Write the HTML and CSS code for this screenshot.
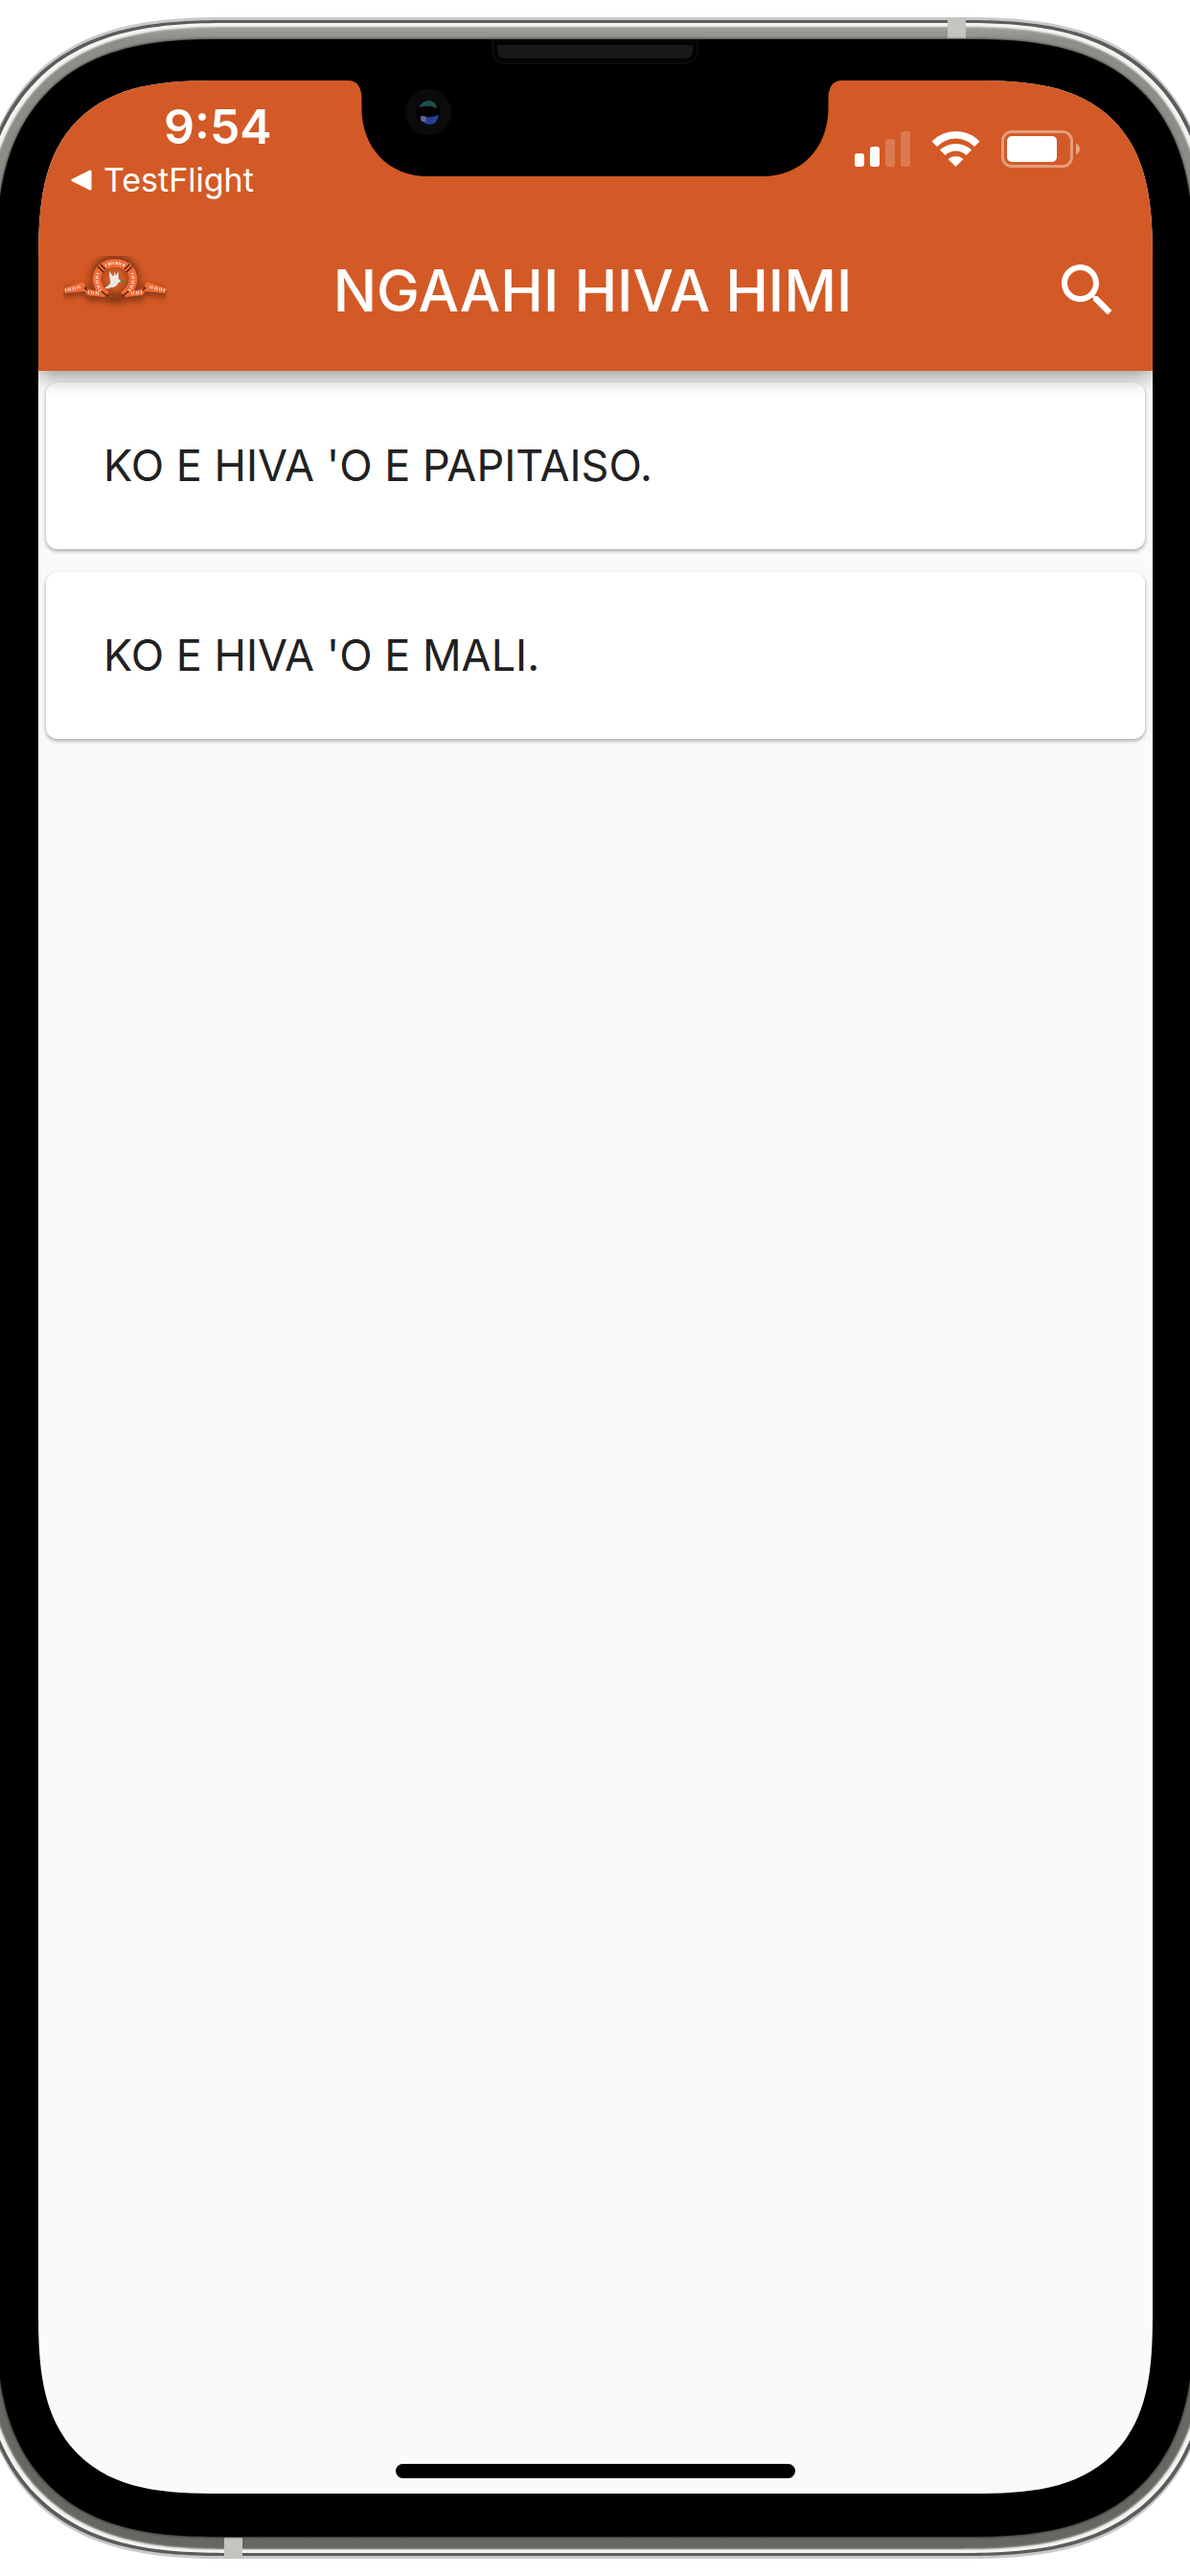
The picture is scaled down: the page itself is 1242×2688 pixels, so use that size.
FILE: index.html
```html
<!DOCTYPE html>
<html lang="to">
<head>
  <meta charset="utf-8">
  <meta name="viewport" content="width=device-width, initial-scale=1">
  <title>NGAAHI HIVA HIMI</title>
  <link rel="stylesheet" href="styles.css">
</head>
<body>
  <div class="stage">
    <div class="phone">
      <span class="antenna antenna-top"></span>
      <span class="antenna antenna-bottom"></span>
      <div class="bezel">
        <span class="speaker"></span>
        <svg class="notch" viewBox="0 0 516 101" aria-hidden="true">
          <path d="M0 0C11 0 14 8 14.500 18V30C15 70 42 100 84 100H432C474 100 501 70 501.500 30V18C502 8 505 0 516 0Z" fill="#000"/>
          <circle cx="84" cy="33" r="24" fill="#0b0b0b"/>
          <circle cx="84" cy="33" r="13" fill="#020204"/>
          <path d="M74 28Q78 20 86 21Q92 22 93 29Q86 25 74 28Z" fill="#1c4f4c"/>
          <path d="M75 37Q84 40 95 36Q94 46 84 46Q77 45 75 37Z" fill="#233f94"/>
          <circle cx="79" cy="40" r="3" fill="#6d6090"/>
        </svg>
        <div class="screen">
          <header class="header">
            <div class="status">
              <div class="status-left">
                <time class="clock">9:54</time>
                <a class="back" href="#testflight">
                  <svg class="back-arrow" viewBox="0 0 22 22" aria-hidden="true"><path d="M2 11L20 2V20Z" fill="#fff" stroke="#fff" stroke-width="3" stroke-linejoin="round"/></svg>
                  TestFlight
                </a>
              </div>
              <div class="status-right">
                <svg class="signal" viewBox="0 0 58 37" aria-hidden="true" fill="#fff">
                  <rect y="23" width="10" height="14" rx="3"/>
                  <rect x="16" y="16" width="10" height="21" rx="3"/>
                  <rect x="32" y="8" width="10" height="29" rx="3" opacity=".2"/>
                  <rect x="48" width="10" height="37" rx="3" opacity=".2"/>
                </svg>
                <svg class="wifi" viewBox="0 0 51 37" aria-hidden="true" fill="#fff">
                  <path d="M.5 10.500Q11 0 25.500 0T50.500 10.500L45 16Q36.500 7.500 25.500 7.500T6 16Z"/>
                  <path d="M9 19.500Q16 13 25.500 13T42 19.500L36.500 25Q32 20.500 25.500 20.500T14.500 25Z"/>
                  <path d="M17.500 29Q21 26 25.500 26T33.500 29L25.500 37Z"/>
                </svg>
                <svg class="battery" viewBox="0 0 82 39" aria-hidden="true">
                  <rect x="1.500" y="1.500" width="72" height="36" rx="9.500" fill="none" stroke="#fff" stroke-opacity=".4" stroke-width="3"/>
                  <rect x="6" y="6" width="52" height="27" rx="5" fill="#fff"/>
                  <path d="M78 13.500Q82 16 82 19.500T78 25.500Z" fill="#fff" fill-opacity=".45"/>
                </svg>
              </div>
            </div>
            <div class="appbar">
              <svg class="logo" viewBox="0 0 108 72" role="img" aria-label="Logo">
                <defs>
                  <filter id="soft" x="-20%" y="-40%" width="140%" height="180%"><feGaussianBlur stdDeviation="3"/></filter>
                </defs>
                <g filter="url(#soft)" opacity=".6" fill="none" stroke="#5a2008">
                  <circle cx="54" cy="24" r="20" stroke-width="12"/>
                  <path d="M0 39L22 35 30 43 46 41M108 39L86 35 78 43 62 41" stroke-width="10"/>
                </g>
                <g fill="#ee6c38">
                  <path d="M0 34L20 27 23 30 22 37 2 39Z"/>
                  <path d="M108 34L88 27 85 30 86 37 106 39Z"/>
                  <path d="M20 33L32 36 42 33 48 38 43 43 25 41Z"/>
                  <path d="M88 33L76 36 66 33 60 38 65 43 83 41Z"/>
                </g>
                <path d="M42 39C28 24 37 7.500 54 7.500S80 24 66 39" fill="none" stroke="#ee6c38" stroke-width="8.500"/>
                <path d="M36 11L42 17M39 9L44 14M72 11L66 17M69 9L64 14M22 33L25 36M86 33L83 36M40 37L46 42M68 37L62 42" stroke="#50220f" stroke-width="1.500" fill="none"/>
                <g fill="none" stroke="#fff" stroke-width="3" opacity=".8">
                  <path d="M44 10Q54 5 64 10" stroke-dasharray="1 2 2 1 1 1"/>
                  <path d="M36 18Q33 28 39 36M72 18Q75 28 69 36" stroke-dasharray="1 2 1 1"/>
                  <path d="M2 36L19 32M106 36L89 32M26 38L37 39M82 38L71 39" stroke-dasharray="1 2 1 1"/>
                </g>
                <path d="M48 15L52 21 54 15 55 20 58 15V24L62 27 58 28Q55 34 50 33Q46 36 43 33Q48 31 49 28Q47 21 48 15Z" fill="#eee7e0" stroke="#8a4a2c" stroke-width=".5"/>
                <path d="M60 26L64 28" stroke="#3f8d28" stroke-width="2"/>
                <path d="M49 42H57" stroke="#a8440f" stroke-width="2" stroke-dasharray="2 1"/>
              </svg>
              <h1 class="title">NGAAHI HIVA HIMI</h1>
              <button class="search" type="button" aria-label="Search">
                <svg viewBox="0 0 24 24" aria-hidden="true"><path fill="#fff" d="M15.500 14h-.79l-.28-.27C15.410 12.590 16 11.110 16 9.500 16 5.910 13.090 3 9.500 3S3 5.910 3 9.500 5.910 16 9.500 16c1.610 0 3.090-.59 4.230-1.570l.27.28v.79l5 4.990L20.490 19l-4.990-5zm-6 0C7.010 14 5 11.990 5 9.500S7.010 5 9.500 5 14 7.010 14 9.500 11.990 14 9.500 14z"/></svg>
              </button>
            </div>
          </header>
          <main>
            <ul class="list">
              <li><a class="card" href="#papitaiso">KO E HIVA 'O E PAPITAISO.</a></li>
              <li><a class="card" href="#mali">KO E HIVA 'O E MALI.</a></li>
            </ul>
          </main>
          <div class="home-indicator"></div>
        </div>
      </div>
    </div>
  </div>
</body>
</html>
```
FILE: styles.css
```css
* {
  box-sizing: border-box;
}

body {
  margin: 0;
  background: #fff;
  font-family: Inter, "Liberation Sans", sans-serif;
}

svg {
  display: block;
}

.stage {
  display: flex;
  min-height: 100vh;
  padding: 21px 0;
  overflow: hidden;
}

/* Metal case: wider than the window, so its sides run off both edges */
.phone {
  position: relative;
  display: flex;
  flex: 1;
  margin: 0 -24px;
  padding: 20px;
  border-radius: 205px;
  background: linear-gradient(#a9aaa4, #8c8e87 20px, #666761);
  box-shadow:
    0 -3px 0 #c9c9c9,
    0 3px 0 #c9c9c9,
    inset 0 0 0 3px #5c5c5a,
    inset 0 0 2px 7px #f4f4f2;
}

.antenna {
  position: absolute;
  width: 19px;
  height: 22px;
  background: #c3c5bf;
}

.antenna-top {
  top: -3px;
  right: 20%;
}

.antenna-bottom {
  bottom: -3px;
  left: 20%;
}

.bezel {
  position: relative;
  display: flex;
  flex: 1;
  padding: 43px 43px 45px 44px;
  border-radius: 185px;
  background: #000;
  box-shadow: 0 0 3px #000;
}

.speaker {
  position: absolute;
  z-index: 3;
  top: 0;
  left: 50%;
  width: 216px;
  height: 26px;
  margin-left: -108px;
  border: 6px solid #030303;
  border-radius: 0 0 14px 14px;
  outline: 2px solid #0b0b0b;
  outline-offset: -2px;
  background: #181818;
}

.notch {
  position: absolute;
  z-index: 3;
  top: 43px;
  left: 50%;
  width: 516px;
  margin-left: -258px;
}

.screen {
  display: flex;
  flex: 1;
  flex-direction: column;
  min-width: 0;
  overflow: hidden;
  border-radius: 140px;
  background: #fafafa;
}

/* Corners with a continuous curve where the browser can draw them */
@supports (corner-shape: superellipse(1.5)) {
  .phone {
    border-radius: 260px;
    corner-shape: superellipse(1.4);
  }

  .bezel {
    border-radius: 236px;
    corner-shape: superellipse(1.4);
  }

  .screen {
    border-radius: 190px;
    corner-shape: superellipse(1.5);
  }
}

.header {
  position: relative;
  z-index: 1;
  padding: 18px 32px 0 26px;
  background: #d35a26;
  box-shadow: 0 6px 20px rgba(0, 0, 0, 0.4);
  color: #fff;
}

.status {
  display: flex;
  justify-content: space-between;
  height: 117px;
}

.status-left {
  display: flex;
  flex-direction: column;
  gap: 6px;
  padding-left: 8px;
}

.clock {
  padding-left: 97px;
  font-size: 50px;
  font-weight: 600;
  line-height: 60px;
}

.back {
  display: flex;
  align-items: center;
  gap: 12px;
  color: #fff;
  font-size: 34px;
  line-height: 40px;
  text-decoration: none;
}

.back-arrow {
  width: 22px;
}

.status-right {
  display: flex;
  align-items: center;
  align-self: flex-start;
  gap: 22px;
  padding: 34px 44px 0 0;
}

.signal {
  width: 58px;
}

.wifi {
  width: 51px;
}

.battery {
  width: 82px;
}

.appbar {
  display: grid;
  grid-template-columns: 108px 1fr 108px;
  align-items: center;
  height: 168px;
}

.logo {
  width: 108px;
}

.title {
  margin: 0;
  font-size: 60px;
  font-weight: 500;
  line-height: 64px;
  text-align: center;
}

.search {
  justify-self: end;
  width: 72px;
  height: 72px;
  padding: 0;
  border: 0;
  background: none;
}

.list {
  display: flex;
  flex-direction: column;
  gap: 24px;
  margin: 0;
  padding: 12px 8px;
  list-style: none;
}

.card {
  display: flex;
  align-items: center;
  height: 174px;
  padding: 0 60px;
  border-radius: 12px;
  background: #fff;
  box-shadow: 0 2px 4px rgba(0, 0, 0, 0.35);
  color: #212121;
  font-size: 45px;
  line-height: 56px;
  text-decoration: none;
}

.home-indicator {
  align-self: center;
  width: 417px;
  max-width: 50%;
  height: 15px;
  margin: auto 0 16px;
  border-radius: 8px;
  background: #000;
}
```
